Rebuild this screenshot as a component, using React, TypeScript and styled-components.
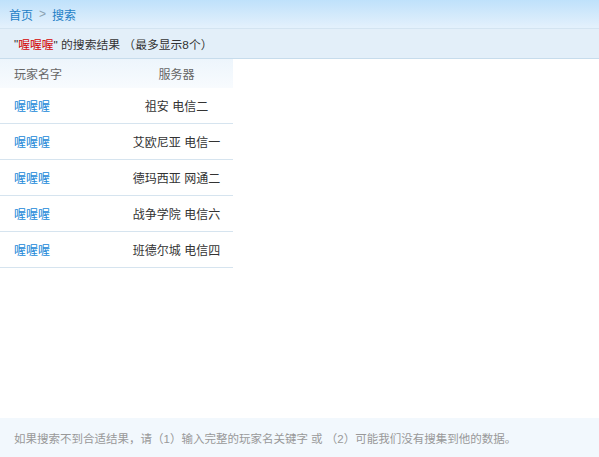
import React from "react";
import styled, { createGlobalStyle } from "styled-components";

const GlobalStyles = createGlobalStyle`
  * {
    box-sizing: border-box;
  }
  html, body {
    margin: 0;
    padding: 0;
    background: #fff;
    font-family: "Liberation Sans", "Noto Sans CJK SC", sans-serif;
    font-size: 12px;
  }
`;

const Page = styled.div`
  min-height: 100vh;
  display: flex;
  flex-direction: column;
`;

const Crumbs = styled.div`
  height: 29px;
  display: flex;
  align-items: center;
  gap: 6px;
  padding-left: 9px;
  background: linear-gradient(#bfe1fb, #e4f1fc);
  border-bottom: 1px solid #d3e4f1;
  color: #1f7fc6;
  font-size: 12px;
`;

const Sep = styled.span`
  color: #8aa0b0;
`;

const TitleBar = styled.div`
  height: 30px;
  display: flex;
  align-items: center;
  padding-left: 14px;
  background: #e3eff9;
  border-bottom: 1px solid #c7dcec;
  color: #333;
  font-size: 11.8px;
`;

const Keyword = styled.span`
  color: #d40000;
`;

const Table = styled.div`
  width: 233px;
`;

const Row = styled.div<{ $head?: boolean }>`
  display: grid;
  grid-template-columns: 120px 113px;
  align-items: center;
  height: ${(p) => (p.$head ? "29px" : "36px")};
  background: ${(p) => (p.$head ? "linear-gradient(#edf5fc, #f8fbfe)" : "#fff")};
  border-bottom: ${(p) => (p.$head ? "none" : "1px solid #d6e4ef")};
  color: ${(p) => (p.$head ? "#666" : "#333")};
`;

const NameCell = styled.div`
  padding-left: 14px;
`;

const ServerCell = styled.div`
  text-align: center;
`;

const PlayerLink = styled.a`
  color: #2088d8;
  text-decoration: none;
`;

const Spacer = styled.div`
  flex: 1;
`;

const Footer = styled.div`
  height: 39px;
  display: flex;
  align-items: center;
  padding-left: 14px;
  background: #f2f8fd;
  color: #999;
  font-size: 11.5px;
`;

const results = [
  { name: "喔喔喔", server: "祖安 电信二" },
  { name: "喔喔喔", server: "艾欧尼亚 电信一" },
  { name: "喔喔喔", server: "德玛西亚 网通二" },
  { name: "喔喔喔", server: "战争学院 电信六" },
  { name: "喔喔喔", server: "班德尔城 电信四" },
];

export default function App() {
  return (
    <Page>
      <GlobalStyles />
      <Crumbs>
        <span>首页</span>
        <Sep>&gt;</Sep>
        <span>搜索</span>
      </Crumbs>
      <TitleBar>
        "<Keyword>喔喔喔</Keyword>" 的搜索结果 （最多显示8个）
      </TitleBar>
      <Table>
        <Row $head>
          <NameCell>玩家名字</NameCell>
          <ServerCell>服务器</ServerCell>
        </Row>
        {results.map((r, i) => (
          <Row key={i}>
            <NameCell>
              <PlayerLink href="#">{r.name}</PlayerLink>
            </NameCell>
            <ServerCell>{r.server}</ServerCell>
          </Row>
        ))}
      </Table>
      <Spacer />
      <Footer>
        如果搜索不到合适结果，请（1）输入完整的玩家名关键字 或 （2）可能我们没有搜集到他的数据。
      </Footer>
    </Page>
  );
}
